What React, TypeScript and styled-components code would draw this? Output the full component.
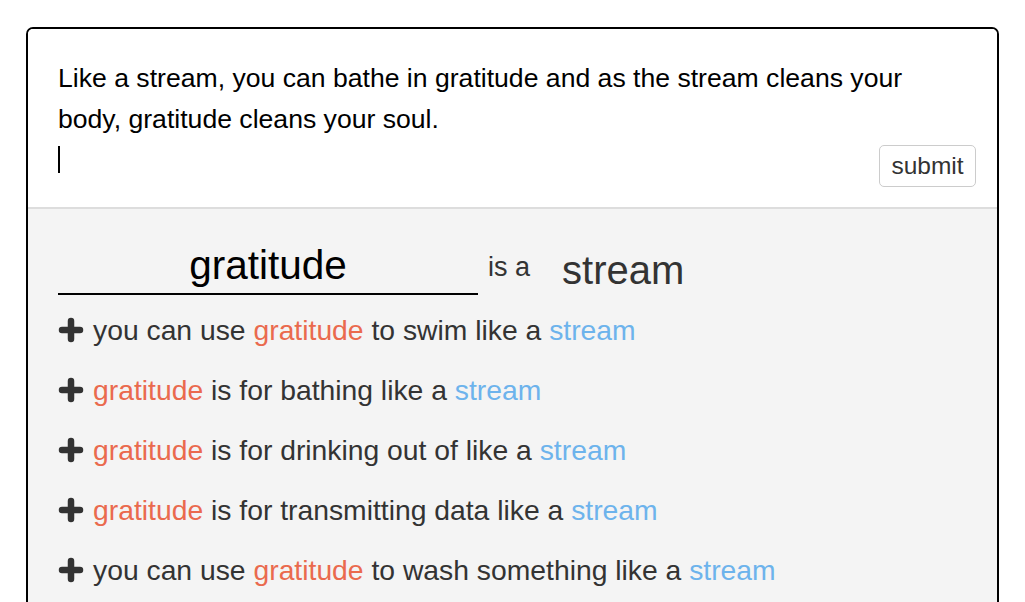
import React from "react";
import styled, { createGlobalStyle } from "styled-components";

const Global = createGlobalStyle`
  html, body { margin: 0; padding: 0; background: #fff; }
  body { font-family: "Liberation Sans", Arial, Helvetica, sans-serif; color: #333; }
`;

const Page = styled.div`
  padding: 27px 26px 0 26px;
  width: 973px;
`;

const Card = styled.div`
  border: 2px solid #000;
  border-bottom: none;
  border-radius: 7px 7px 0 0;
  overflow: hidden;
  height: 600px;
  background: #f4f4f4;
`;

const Editor = styled.div`
  background: #fff;
  padding: 30px 21px 20px 30px;
  border-bottom: 2px solid #ddd;
`;

const EditorText = styled.div`
  font-size: 26.6px;
  line-height: 41px;
  color: #000;
  margin-top: -1px;
  max-width: 880px;
`;

const EditorFoot = styled.div`
  display: flex;
  justify-content: space-between;
  align-items: flex-start;
  margin-top: 5px;
`;

const Caret = styled.span`
  display: block;
  width: 2px;
  height: 27px;
  background: #000;
  margin-top: 1px;
`;

const Submit = styled.button`
  font-family: inherit;
  font-size: 24.5px;
  color: #333;
  background: #fff;
  border: 1px solid #ccc;
  border-radius: 5px;
  height: 42px;
  width: 97px;
  padding: 0;
`;

const Body = styled.div`
  padding: 28px 30px 0 30px;
`;

const Heading = styled.div`
  display: flex;
  align-items: flex-end;
  margin-bottom: 5px;
`;

const SubjectField = styled.div`
  width: 420px;
  border-bottom: 2px solid #000;
  text-align: center;
  font-size: 40.5px;
  line-height: 56px;
  color: #000;
`;

const IsA = styled.span`
  font-size: 27px;
  margin: 0 32px 12px 10px;
`;

const Object = styled.span`
  font-size: 40px;
  margin-bottom: 2px;
`;

const List = styled.ul`
  list-style: none;
  margin: 0;
  padding: 0;
`;

const Item = styled.li`
  display: flex;
  align-items: center;
  height: 60px;
  font-size: 28.3px;
  color: #333;
`;

const PlusIcon = styled.svg`
  width: 26px;
  height: 26px;
  margin-right: 9px;
  flex-shrink: 0;
`;

const Word = styled.span<{ $kind: "subject" | "object" }>`
  color: ${(p) => (p.$kind === "subject" ? "#ea6a4e" : "#6db3ec")};
`;

const Plus = () => (
  <PlusIcon viewBox="0 0 26 26">
    <path d="M13 4 V22 M4 13 H22" stroke="#333" strokeWidth="6.5" strokeLinecap="round" fill="none" />
  </PlusIcon>
);

type Part = string | { s: string } | { o: string };

const items: Part[][] = [
  ["you can use ", { s: "gratitude" }, " to swim like a ", { o: "stream" }],
  [{ s: "gratitude" }, " is for bathing like a ", { o: "stream" }],
  [{ s: "gratitude" }, " is for drinking out of like a ", { o: "stream" }],
  [{ s: "gratitude" }, " is for transmitting data like a ", { o: "stream" }],
  ["you can use ", { s: "gratitude" }, " to wash something like a ", { o: "stream" }],
];

export default function App() {
  return (
    <>
      <Global />
      <Page>
        <Card>
          <Editor>
            <EditorText>
              Like a stream, you can bathe in gratitude and as the stream cleans your body, gratitude cleans your soul.
            </EditorText>
            <EditorFoot>
              <Caret />
              <Submit>submit</Submit>
            </EditorFoot>
          </Editor>
          <Body>
            <Heading>
              <SubjectField>gratitude</SubjectField>
              <IsA>is a</IsA>
              <Object>stream</Object>
            </Heading>
            <List>
              {items.map((parts, i) => (
                <Item key={i}>
                  <Plus />
                  <span>
                    {parts.map((p, j) =>
                      typeof p === "string" ? (
                        <React.Fragment key={j}>{p}</React.Fragment>
                      ) : "s" in p ? (
                        <Word key={j} $kind="subject">{p.s}</Word>
                      ) : (
                        <Word key={j} $kind="object">{p.o}</Word>
                      )
                    )}
                  </span>
                </Item>
              ))}
            </List>
          </Body>
        </Card>
      </Page>
    </>
  );
}
